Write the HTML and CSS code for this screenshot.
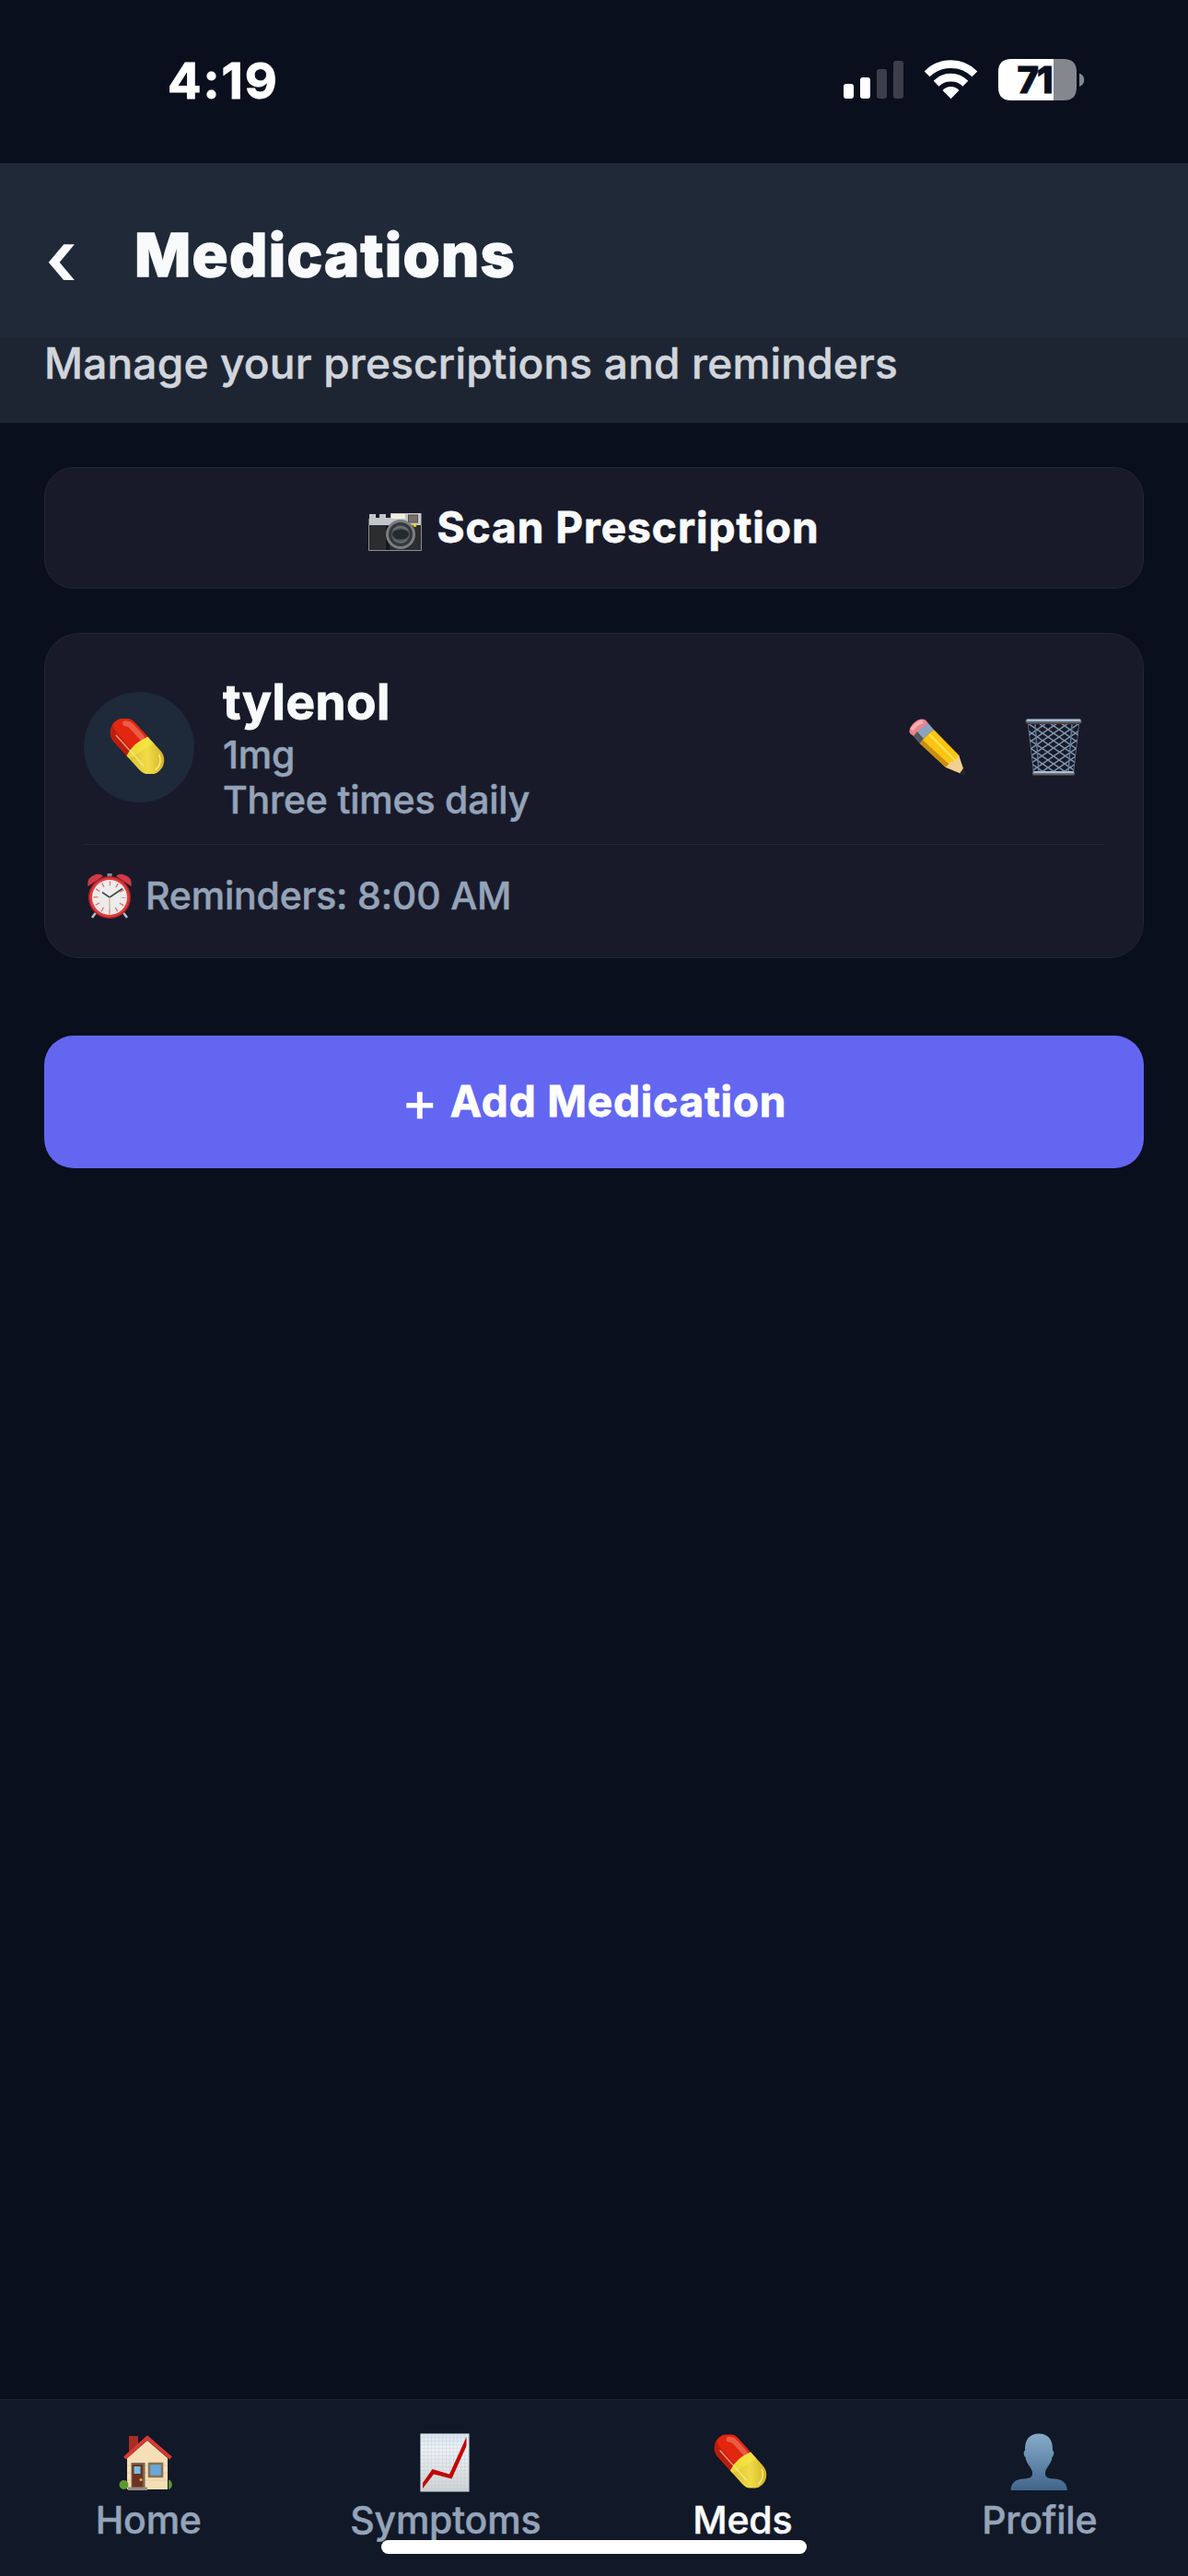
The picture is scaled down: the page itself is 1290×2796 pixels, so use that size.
FILE: index.html
```html
<!DOCTYPE html>
<html lang="en">
<head>
	<meta charset="UTF-8">
	<title>Medications</title>
	<link rel="stylesheet" href="styles.css">
</head>
<body>
	<!-- shared pill icon -->
	<svg class="defs" width="0" height="0">
		<defs>
			<linearGradient id="yellow" x1="0" y1="1" x2="1" y2="0">
				<stop offset="0" stop-color="#d9bd2c"></stop>
				<stop offset=".5" stop-color="#f0dc48"></stop>
				<stop offset="1" stop-color="#c9a51c"></stop>
			</linearGradient>
			<symbol id="pill" viewBox="0 0 60 60">
				<g transform="rotate(48 30 30)">
					<path d="M32 14.500 H9.500 A15.500 15.500 0 0 0 9.500 45.500 H32 Z" fill="#e2260f"></path>
					<path d="M32 37 H8 Q0 37 -5 34 Q-2 45.500 9.500 45.500 H32 Z" fill="#bd1c0c"></path>
					<path d="M30 14.500 H50.500 A15.500 15.500 0 0 1 50.500 45.500 H30 Q24 30 30 14.500 Z" fill="url(#yellow)"></path>
					<path d="M30 14.500 H40 L34 45.500 H30 Q24 30 30 14.500 Z" fill="#fbf03e" opacity=".45"></path>
					<path d="M3 23 Q6 20 11 20 H26" fill="none" stroke="#f4917c" stroke-width="6" stroke-linecap="round" opacity=".5"></path>
					<path d="M6 39 H50" fill="none" stroke="#fff2b0" stroke-width="1.500" stroke-linecap="round" opacity=".6"></path>
					<path d="M53 18.500 Q62 22 62.500 32" fill="none" stroke="#fff6a0" stroke-width="1.500" stroke-linecap="round" opacity=".8"></path>
				</g>
			</symbol>
		</defs>
	</svg>

	<div class="status">
		<span class="time">4:19</span>
		<svg class="status-icons" width="262" height="66" viewBox="916 54 262 66">
			<!-- signal -->
			<rect x="916" y="91" width="11" height="16" rx="3" fill="#fff"></rect>
			<rect x="934" y="84" width="11" height="23" rx="3" fill="#fff"></rect>
			<rect x="952" y="75" width="11" height="32" rx="3" fill="#3c3f4b"></rect>
			<rect x="970" y="66" width="11" height="41" rx="3" fill="#3c3f4b"></rect>
			<!-- wifi -->
			<path d="M1003.700 77.500 Q1015.500 65.300 1032.500 65.300 T1061.300 77.500 L1055.500 83.300 Q1046 74 1032.500 74 T1009.500 83.300 Z" fill="#fff"></path>
			<path d="M1013.700 87.800 Q1021.500 79.800 1032.500 79.800 T1051.300 87.800 L1045.500 93.800 Q1040.500 88.500 1032.500 88.500 T1019.500 93.800 Z" fill="#fff"></path>
			<path d="M1023.500 98 Q1027.500 94 1032.500 94 T1041.500 98 L1032.500 107.300 Z" fill="#fff"></path>
			<!-- battery -->
			<path d="M1098 64 H1144 V109 H1098 Q1084 109 1084 95 V78 Q1084 64 1098 64 Z" fill="#fff"></path>
			<path d="M1144 64 H1155 Q1169 64 1169 78 V95 Q1169 109 1155 109 H1144 Z" fill="#85878f"></path>
			<path d="M1172 79.500 Q1177.300 81.500 1177.300 86.700 T1172 94 Z" fill="#85878f"></path>
			<text class="battery-text" x="1123" y="101" text-anchor="middle">71</text>
		</svg>
	</div>

	<div class="header">
		<span class="back">‹</span>
		<h1 class="title">Medications</h1>
	</div>
	<div class="subtitle">Manage your prescriptions and reminders</div>

	<div class="content">
		<div class="scan">
			<svg class="camera" width="58" height="41" viewBox="0 0 58 41">
				<path d="M1 6 V1 H8 V5 H12 V1 H19 V5 H24 V0 H57.500 V14 H0.500 V6 Z" fill="#c3c6c9"></path>
				<rect x="0.500" y="13" width="57" height="27.500" fill="#2c2d2e"></rect>
				<path d="M0.500 13 V40.500 H57.500 V13" fill="none" stroke="#8c8e91" stroke-width="1"></path>
				<rect x="19" y="14" width="4" height="26" fill="#151617"></rect>
				<rect x="25" y="1" width="15" height="5" rx="1" fill="#f4eee0"></rect>
				<rect x="43.500" y="2" width="10" height="8" fill="#77706a" stroke="#564d48" stroke-width="1"></rect>
				<circle cx="35" cy="23" r="16" fill="#7b7e81"></circle>
				<circle cx="35" cy="23" r="13" fill="#34383a"></circle>
				<circle cx="35" cy="23" r="10" fill="#555b60"></circle>
				<ellipse cx="35" cy="23" rx="9" ry="5.500" fill="#272a2d"></ellipse>
				<path d="M27 18 Q35 12 43 18" fill="none" stroke="#6b7176" stroke-width="1.500"></path>
				<path d="M28 29 Q35 34 42 29" fill="none" stroke="#676d72" stroke-width="1.500"></path>
				<circle cx="50.500" cy="13" r="1.900" fill="#ffd21a"></circle>
			</svg>
			<span class="scan-text">Scan Prescription</span>
		</div>

		<div class="card">
			<div class="card-top">
				<div class="avatar"><svg class="pill" width="60" height="60"><use href="#pill"></use></svg></div>
				<div class="info">
					<div class="name">tylenol</div>
					<div class="dose">1mg</div>
					<div class="freq">Three times daily</div>
				</div>
				<!-- pencil -->
				<svg class="pencil" width="63" height="63" viewBox="0 0 63 63">
					<path d="M1 16 Q-1 11 5 5 Q12 -1.500 18 1.500 L21 5 L5 19 Z" fill="#f0838a"></path>
					<path d="M3 12 Q8 5 15 3" fill="none" stroke="#f9adb0" stroke-width="4"></path>
					<path d="M5 19 Q12 10 21 5 L27 12 Q19 17 12 27 Z" fill="#8ba3c1"></path>
					<path d="M5 19 L9 14 L16 22 L12 27 Z" fill="#56585d"></path>
					<path d="M12 27 Q19 17 27 12 L54 39.500 L58 55 L40 53 Z" fill="#fdc613"></path>
					<path d="M12 27 L15 23 L44 50 L40 53 Z" fill="#c98e12"></path>
					<path d="M22 17 L51 46" stroke="#fee05a" stroke-width="2"></path>
					<path d="M54 39.500 L59 54 L57 60 L40 53 L45 47 L50 46 Z" fill="#f3cf91"></path>
					<path d="M59 54 L62 62 L55 59.500 Z" fill="#26272b"></path>
				</svg>
				<!-- trash -->
				<svg class="trash" width="62" height="62" viewBox="0 0 62 62">
					<defs>
						<clipPath id="basket"><path d="M3 6 H59 L53 58 H9 Z"></path></clipPath>
					</defs>
					<g clip-path="url(#basket)" fill="none" stroke="#8296ad" stroke-width="1.500">
						<path d="M-20 6 L62 62 M-10 4 L62 53 M0 3 L62 45 M12 3 L62 37 M24 3 L62 29 M36 3 L62 21 M-6 24 L50 62 M-6 32 L38 62 M-6 40 L26 62 M-6 48 L14 62"></path>
						<path d="M82 6 L0 62 M72 4 L0 53 M62 3 L0 45 M50 3 L0 37 M38 3 L0 29 M26 3 L0 21 M68 24 L12 62 M68 32 L24 62 M68 40 L36 62 M68 48 L48 62"></path>
						<path d="M3 6 L9 58 M11 6 L15 58 M51 6 L47 58 M59 6 L53 58" stroke="#607998"></path>
					</g>
					<rect x="0.500" y="0.500" width="61" height="5" rx="2.500" fill="#675f5a"></rect>
					<rect x="1.500" y="0.500" width="59" height="2.500" rx="1.200" fill="#9fc0df"></rect>
					<rect x="8" y="57" width="46" height="4.500" rx="1.500" fill="#67615e"></rect>
					<rect x="9" y="57" width="44" height="2.300" rx="1" fill="#a3bed6"></rect>
				</svg>
			</div>
			<div class="reminder">
				<svg class="clock" width="48" height="49" viewBox="0 0 48 49">
					<path d="M11 40 L5 48 M37 40 L43 48" stroke="#b9bec5" stroke-width="2.500"></path>
					<rect x="21.500" y="0" width="5" height="4" fill="#878c94"></rect>
					<path d="M0.500 14 Q-1 5 7 2 Q13 -1 17 3 Z" fill="#d03a47"></path>
					<path d="M47.500 14 Q49 5 41 2 Q35 -1 31 3 Z" fill="#d03a47"></path>
					<circle cx="24" cy="26" r="23" fill="#bd2027"></circle>
					<circle cx="24" cy="26" r="21.500" fill="#d8413f"></circle>
					<circle cx="24" cy="26" r="19" fill="#ebeceb"></circle>
					<!-- hour marks -->
					<circle cx="24" cy="26" r="15" fill="none" stroke="#ea6f70" stroke-width="5" stroke-dasharray="1.300 6.554" stroke-dashoffset=".65"></circle>
					<path d="M24 26 L38 16.500 M24 26 L16 20.500" stroke="#454b4b" stroke-width="1.600"></path>
					<path d="M24 26 V45" stroke="#c8b793" stroke-width="1.300"></path>
				</svg>
				<span>Reminders: 8:00 AM</span>
			</div>
		</div>

		<div class="add"><span class="plus">+</span><span class="add-text">Add Medication</span></div>
	</div>

	<div class="tabs">
		<div class="tab">
			<svg width="64" height="64" viewBox="0 0 64 64">
				<path d="M11 3 H21 V14 L11 23 Z" fill="#a92c25"></path>
				<path d="M9 27 L31 8 L53 27 V61 H9 Z" fill="#f4dfb6"></path>
				<path d="M9 35 H53 M9 43 H53 M9 51 H53" stroke="#e5cb9c" stroke-width="1"></path>
				<path d="M6.500 27 L31 5 L56.500 27" fill="none" stroke="#d83a32" stroke-width="4"></path>
				<circle cx="5.500" cy="56" r="5" fill="#5d9631"></circle>
				<path d="M54 50.500 A5.500 5.500 0 0 1 54 61 Z" fill="#5d9631"></path>
				<rect x="13.500" y="32" width="15" height="27" fill="#7c6654"></rect>
				<rect x="14.500" y="34" width="11.500" height="25" fill="#6c3322"></rect>
				<rect x="16.500" y="36" width="7" height="8" fill="#77bde3"></rect>
				<circle cx="24" cy="50.500" r="1.500" fill="#f1b544"></circle>
				<rect x="33" y="33" width="14" height="14" fill="#67a9d9" stroke="#8b7157" stroke-width="2.500"></rect>
				<rect x="10" y="58.500" width="21" height="3.500" fill="#958b82"></rect>
			</svg>
			<span>Home</span>
		</div>
		<div class="tab">
			<svg width="64" height="64" viewBox="0 0 64 64">
				<defs>
					<linearGradient id="paper" x1="0" y1="0" x2="0" y2="1">
						<stop offset="0" stop-color="#d9e4ed"></stop>
						<stop offset=".25" stop-color="#eef2f5"></stop>
						<stop offset="1" stop-color="#cfd2d3"></stop>
					</linearGradient>
					<pattern id="grid" width="4" height="4" patternUnits="userSpaceOnUse">
						<path d="M0 0 H4 M0 0 V4" stroke="#b7c9d8" stroke-width="1" fill="none"></path>
					</pattern>
				</defs>
				<rect x="4.500" y="0.500" width="53" height="63" fill="url(#paper)"></rect>
				<rect x="4.500" y="0.500" width="53" height="63" fill="url(#grid)" opacity=".7"></rect>
				<path d="M7 54 L17.500 39 L36 44.500 L54.500 4 V14 L38.500 49.500 L19 44.500 L7 60 Z" fill="#c00707"></path>
			</svg>
			<span>Symptoms</span>
		</div>
		<div class="tab active">
			<svg width="64" height="64" viewBox="0 0 64 64"><use href="#pill" x="1" y="1.500" width="58" height="58"></use></svg>
			<span>Meds</span>
		</div>
		<div class="tab">
			<svg width="64" height="64" viewBox="0 0 64 64">
				<defs>
					<linearGradient id="bust" x1="0" y1="0" x2="0" y2="1">
						<stop offset="0" stop-color="#86acc8"></stop>
						<stop offset=".4" stop-color="#6b90b1"></stop>
						<stop offset="1" stop-color="#41658d"></stop>
					</linearGradient>
				</defs>
				<path d="M31 0.500 C41 0.500 46.500 7 46 19 C48 19 47.500 25 45.500 26 C45 33 38 38 38 43 C37.500 48 41 49 47 49.500 C57 50 61.500 54 62 62 H0.500 C1 54 5 50 15 49.500 C21 49 24.500 48 24 43 C24 38 17 33 16.500 26 C14.500 25 14 19 16 19 C15.500 7 21 0.500 31 0.500 Z" fill="url(#bust)"></path>
			</svg>
			<span>Profile</span>
		</div>
		<div class="home-bar"></div>
	</div>
</body>
</html>
```

FILE: styles.css
```css
*{
	box-sizing: border-box;
}
body{
	margin: 0;
	width: 1290px;
	height: 2796px;
	display: flex;
	flex-direction: column;
	background: #090f1d;
	color: #f9fafc;
	font-family: Inter, "Liberation Sans", sans-serif;
	overflow: hidden;
}
svg{
	flex: none;
	display: block;
}
.defs{
	position: absolute;
}
.status{
	height: 177px;
	padding: 54px 112px 0 182px;
	display: flex;
	justify-content: space-between;
	align-items: flex-start;
}
.time{
	margin-top: 10px;
	font-size: 54px;
	font-weight: 700;
	line-height: 48px;
	letter-spacing: 2px;
	color: #fff;
	-webkit-text-stroke: 1px #fff;
}
.battery-text{
	font-size: 40px;
	font-weight: 800;
	letter-spacing: -2px;
	fill: #090f1d;
	stroke: #090f1d;
	stroke-width: 1px;
}
.header{
	height: 189px;
	padding: 61px 48px 0 48px;
	display: flex;
	background: #202937;
}
.back{
	width: 98px;
	padding: 3px 0 0 1px;
	font-size: 84px;
	font-weight: 600;
	line-height: 78px;
}
.title{
	margin: 0;
	font-size: 65px;
	font-weight: 800;
	line-height: 78px;
	letter-spacing: 1.3px;
	-webkit-text-stroke: 1.6px #f9fafc;
}
.subtitle{
	height: 93px;
	padding: 0 48px;
	background: #1d2533;
	color: #d1d5db;
	font-size: 46px;
	font-weight: 500;
	line-height: 56px;
	letter-spacing: 0.2px;
	-webkit-text-stroke: 0.5px #d1d5db;
}
.content{
	flex: 1;
	padding: 48px 48px 0;
}
.scan{
	height: 132px;
	display: flex;
	align-items: center;
	justify-content: center;
	gap: 16px;
	background: #181a29;
	border: 1px solid #1f2634;
	border-radius: 32px;
	font-size: 46px;
	font-weight: 700;
}
.scan-text, .add-text{
	padding-bottom: 3px;
	-webkit-text-stroke: 0.8px currentColor;
}
.scan-text{
	letter-spacing: 1px;
}
.add-text{
	letter-spacing: 0.8px;
}
.camera{
	margin-top: 8px;
}
.card{
	height: 353px;
	margin-top: 48px;
	padding: 42px;
	background: #181a29;
	border: 1px solid #222635;
	border-radius: 38px;
}
.card-top{
	height: 187px;
	padding-bottom: 24px;
	display: flex;
	align-items: center;
	border-bottom: 1px solid #222635;
}
.avatar{
	width: 120px;
	height: 120px;
	display: flex;
	align-items: center;
	justify-content: center;
	border-radius: 50%;
	background: #1e293a;
}
.pill{
	margin: 0 4px 3px 0;
}
.info{
	flex: 1;
	margin-left: 31px;
	color: #94a3b8;
	font-size: 41px;
	font-weight: 500;
	line-height: 49px;
	letter-spacing: -0.2px;
	-webkit-text-stroke: 0.5px currentColor;
}
.name{
	color: #f9fafc;
	font-size: 53px;
	font-weight: 700;
	line-height: 65px;
	letter-spacing: 0.5px;
	-webkit-text-stroke: 1px currentColor;
}
.pencil{
	margin-right: 63px;
}
.trash{
	margin-right: 24px;
}
.reminder{
	padding: 31px 4px 0;
	display: flex;
	align-items: center;
	gap: 15px;
	color: #94a3b8;
	font-size: 41px;
	font-weight: 500;
	line-height: 49px;
	letter-spacing: -0.2px;
	-webkit-text-stroke: 0.5px currentColor;
}
.add{
	height: 144px;
	margin-top: 84px;
	display: flex;
	align-items: center;
	justify-content: center;
	gap: 13px;
	background: #6366f1;
	border-radius: 32px;
	color: #fff;
	font-size: 46px;
	font-weight: 700;
}
.plus{
	padding-bottom: 3px;
	font-size: 60px;
	font-weight: 500;
	line-height: 60px;
}
.tabs{
	position: relative;
	height: 192px;
	padding-top: 36px;
	display: flex;
	background: #111827;
	border-top: 1px solid #1d2633;
}
.tab{
	flex: 1;
	display: flex;
	flex-direction: column;
	align-items: center;
	gap: 6px;
	color: #94a3b8;
	font-size: 41px;
	font-weight: 500;
	line-height: 48px;
	letter-spacing: -0.2px;
	-webkit-text-stroke: 0.5px currentColor;
}
.active{
	color: #f9fafc;
}
.home-bar{
	position: absolute;
	left: 414px;
	top: 152px;
	width: 462px;
	height: 15px;
	border-radius: 8px;
	background: #fff;
}
```
